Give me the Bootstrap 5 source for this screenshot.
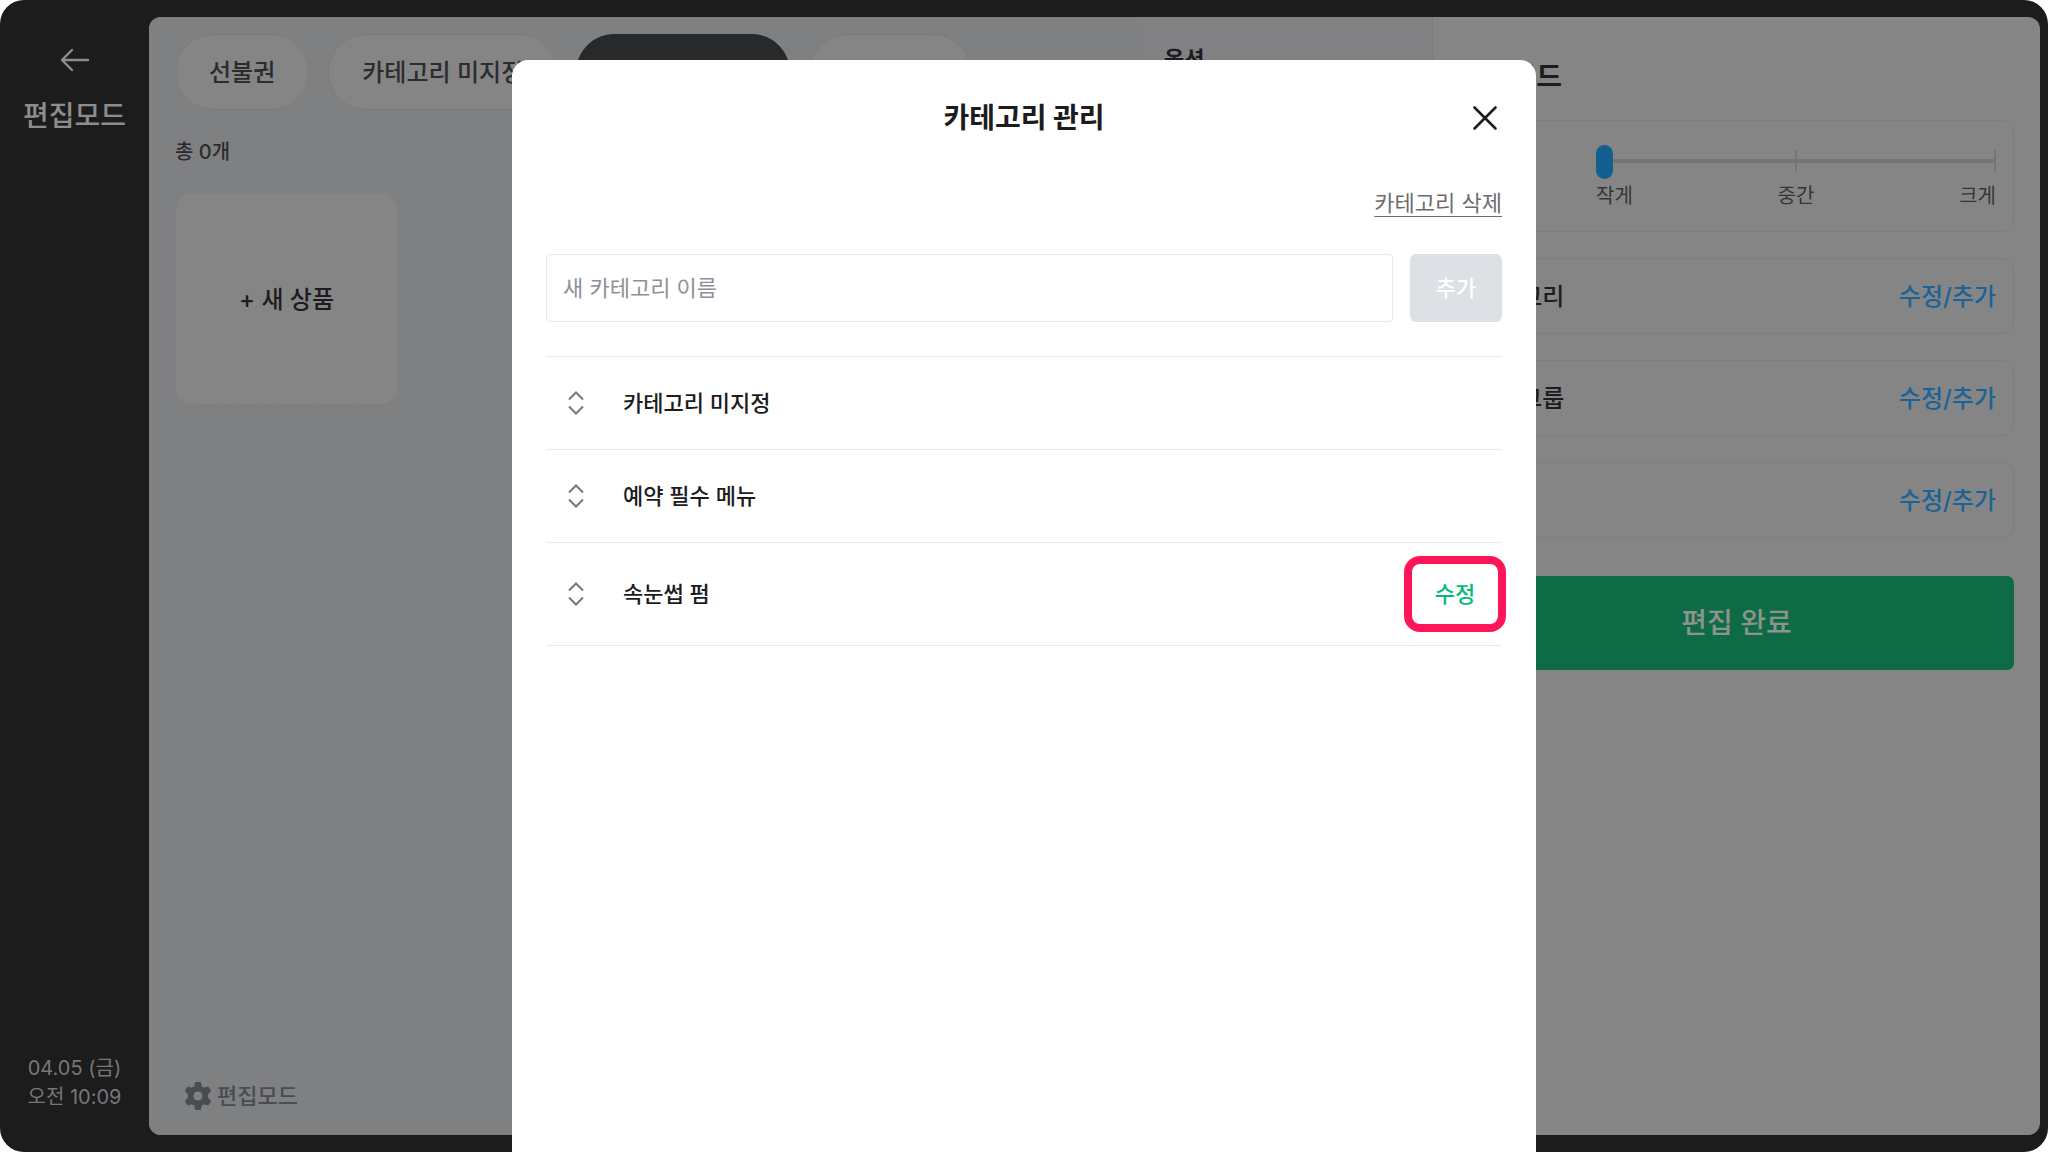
<!DOCTYPE html>
<html lang="ko">
<head>
<meta charset="utf-8">
<meta name="viewport" content="width=device-width, initial-scale=1">
<title>카테고리 관리</title>
<link href="https://cdn.jsdelivr.net/npm/bootstrap@5.3.0/dist/css/bootstrap.min.css" rel="stylesheet">
<style>
  :root { --ink: #1c1c1e; --dim-white: #858585; --dim-blue: #145f92; }
  body { font-family: Inter, "Noto Sans CJK KR", sans-serif; font-size: 22px; line-height: 32px; background: #fff; color: var(--ink); font-weight: 500; }
  button, input { font: inherit; }
  .t-20 { font-size: 20px; line-height: 30px; }
  .t-22 { font-size: 22px; line-height: 32px; }
  .t-24 { font-size: 24px; line-height: 36px; }
  .t-28 { font-size: 28px; line-height: 40px; }

  .app { background: #1c1c1d; border-radius: 24px; padding: 17px 8px 17px 0; }
  .side { flex: 0 0 149px; color: #8d8d8e; padding: 23px 0; }
  .side-clock { color: #777778; font-weight: 400; line-height: 29px; }
  .plain { background: none; border: 0; padding: 0; color: inherit; }

  .work { background: var(--dim-white); border-radius: 12px; }
  .goods { background: #7e8082; padding: 17px 26px 23px; flex: 0 0 989px; }
  .tabs { gap: 19px; }
  .pill { height: 76px; padding: 2px 33px 0; border-radius: 38px; border: 1px solid #7b7c7e; background: var(--dim-white); color: #2c2c2e; white-space: nowrap; }
  .pill.on { background: #28292b; border-color: #28292b; color: var(--dim-white); }
  .total { margin: 27px 0 26px; color: #2c2c2e; }
  .new-item { width: 223px; height: 212px; border: 1px dashed #7b7c7e; border-radius: 16px; background: var(--dim-white); color: var(--ink); padding-top: 2px; }
  .mode { color: #4b4c4f; gap: 5px; margin-left: 9px; }
  .options { flex: 0 0 295px; background: #818183; border-right: 1px solid #7b7b7d; padding: 26px; }
  .edit { padding: 40px 26px 0; min-width: 0; }
  .edit-cards { margin-top: 23px; gap: 26px; }
  .box { border: 1px solid #7e7e7e; border-radius: 12px; padding: 2px 17px 0 16px; min-height: 76px; }
  .box-size { min-height: 112px; }
  .more { color: #1b6396; text-decoration: none; }
  .done { height: 94px; margin-top: 38px; border: 0; border-radius: 7px; background: #0f6a46; color: #8b958e; }

  .sizes { width: 400px; padding-top: 6px; }
  .rail { height: 34px; background:
      linear-gradient(#757576, #757576) right 0 top 5px / 2px 22px no-repeat,
      linear-gradient(#757576, #757576) center top 5px / 2px 22px no-repeat,
      linear-gradient(#757576, #757576) center top 14px / 100% 4px no-repeat; }
  .rail input { appearance: none; width: 100%; height: 34px; margin: 0; background: none; display: block; }
  .rail input::-webkit-slider-runnable-track { height: 34px; background: none; }
  .rail input::-webkit-slider-thumb { appearance: none; width: 17px; height: 34px; border-radius: 9px; background: var(--dim-blue); }
  .rail input::-moz-range-thumb { width: 17px; height: 34px; border: 0; border-radius: 9px; background: var(--dim-blue); }
  .size-names { color: #353537; font-weight: 400; padding-top: 2px; }

  .sheet { width: 50%; top: 60px; bottom: 0; left: 25%; z-index: 10; background: #fff; border-radius: 16px 16px 0 0; padding: 38px 34px; }
  .sheet-head { display: grid; grid-template-columns: 1fr auto 1fr; align-items: center; }
  .sheet-head h1 { margin: 0; font-weight: 700; }
  .closer { justify-self: end; padding: 0 4px; display: flex; }
  .remove { color: #6c6c6f; font-weight: 400; text-underline-offset: 5px; text-decoration-thickness: 1px; }
  .remove-row { margin-top: 49px; }
  .adder { margin-top: 35px; gap: 17px; }
  .adder input { height: 68px; min-width: 0; border: 1px solid #e8e8ea; border-radius: 4px; padding: 0 16px; font-weight: 400; }
  .adder input::placeholder { color: #8e9096; opacity: 1; }
  .adder button { width: 92px; height: 68px; border: 0; border-radius: 6px; background: #dde0e5; color: #fff; }
  .rows { margin: 34px 0 0; border-top: 1px solid #e8e8ea; }
  .entry { height: 93px; border-bottom: 1px solid #e8e8ea; padding-left: 22px; gap: 39px; }
  .entry-tall { height: 103px; }
  .fix { color: #03b97c; width: 94px; height: 76px; }
  .fix::after { content: ""; position: absolute; inset: 0 -4px; border: 8px solid #fe1658; border-radius: 16px; }
</style>
<script src="https://cdn.jsdelivr.net/npm/bootstrap@5.3.0/dist/js/bootstrap.bundle.min.js"></script>
</head>
<body>
<div class="app d-flex vh-100 overflow-hidden">
  <aside class="side d-flex flex-column align-items-center">
    <button class="plain d-flex pt-2 mb-4" type="button" aria-label="뒤로">
      <svg width="30" height="24" viewBox="0 0 30 24" fill="none" stroke="currentColor" stroke-width="2.4" stroke-linecap="round" stroke-linejoin="round"><path d="M12 2 2 12l10 10M2 12h26"/></svg>
    </button>
    <div class="t-28">편집모드</div>
    <div class="side-clock t-20 mt-auto text-center">04.05 (금)<br>오전 10:09</div>
  </aside>

  <main class="work d-flex flex-grow-1 overflow-hidden">
    <section class="goods d-flex flex-column">
      <nav class="tabs d-flex" aria-label="카테고리">
        <button class="pill t-24" type="button">선불권</button>
        <button class="pill t-24" type="button">카테고리 미지정</button>
        <button class="pill on t-24" type="button">예약 필수 메뉴</button>
        <button class="pill t-24" type="button">속눈썹 펌</button>
      </nav>
      <p class="total t-20">총 0개</p>
      <button class="new-item t-24" type="button">+ 새 상품</button>
      <button class="mode plain d-flex align-items-center mt-auto align-self-start t-22" type="button">
        <svg width="28" height="30" viewBox="0 0 28 30" fill="currentColor" fill-rule="evenodd" stroke="currentColor" stroke-linejoin="round"><path d="M11.500 1.500h5l.8 4 3 1.700 3.900-1.300 2.500 4.300-3.100 2.800v4l3.100 2.800-2.500 4.300-3.900-1.300-3 1.700-.8 4h-5l-.8-4-3-1.700-3.900 1.300-2.500-4.300L4.400 17v-4l-3.100-2.800 2.500-4.300 3.900 1.300 3-1.700zM14 10a5 5 0 1 0 0 10 5 5 0 0 0 0-10z"/></svg>
        편집모드
      </button>
    </section>
    <section class="options"><div class="t-22 fw-bold">옵션</div></section>
    <section class="edit flex-grow-1">
      <h2 class="t-28 m-0 fw-bold">편집모드</h2>
      <div class="edit-cards d-flex flex-column">
        <div class="box box-size d-flex justify-content-between">
          <label class="t-24 align-self-center" for="size">크기</label>
          <div class="sizes mt-3">
            <div class="rail"><input id="size" type="range" min="0" max="2" value="0"></div>
            <div class="size-names d-flex justify-content-between t-20"><span>작게</span><span>중간</span><span>크게</span></div>
          </div>
        </div>
        <div class="box d-flex justify-content-between align-items-center t-24"><span>카테고리</span><a class="more" href="#">수정/추가</a></div>
        <div class="box d-flex justify-content-between align-items-center t-24"><span>옵션그룹</span><a class="more" href="#">수정/추가</a></div>
        <div class="box d-flex justify-content-between align-items-center t-24"><span>할인</span><a class="more" href="#">수정/추가</a></div>
      </div>
      <button class="done t-28 w-100" type="button">편집 완료</button>
    </section>
  </main>
</div>

<div class="sheet position-fixed" role="dialog" aria-modal="true" aria-labelledby="sheet-title">
  <header class="sheet-head">
    <span></span>
    <h1 class="t-28" id="sheet-title">카테고리 관리</h1>
    <button class="closer plain" type="button" aria-label="닫기">
      <svg width="26" height="26" viewBox="0 0 26 26" fill="none" stroke="currentColor" stroke-width="2.600" stroke-linecap="round"><path d="m2.500 2.500 21 21m0-21-21 21"/></svg>
    </button>
  </header>
  <div class="remove-row text-end"><a class="remove" href="#">카테고리 삭제</a></div>
  <form class="adder d-flex">
    <input class="flex-grow-1" type="text" placeholder="새 카테고리 이름" aria-label="새 카테고리 이름">
    <button type="button">추가</button>
  </form>
  <ul class="rows list-unstyled">
    <li class="entry d-flex align-items-center">
      <svg width="16" height="26" viewBox="0 0 16 26" fill="none" stroke="#77777a" stroke-width="2"><path d="m1 9.500 7-7 7 7M1 16.500l7 7 7-7"/></svg>
      <span>카테고리 미지정</span>
    </li>
    <li class="entry d-flex align-items-center">
      <svg width="16" height="26" viewBox="0 0 16 26" fill="none" stroke="#77777a" stroke-width="2"><path d="m1 9.500 7-7 7 7M1 16.500l7 7 7-7"/></svg>
      <span>예약 필수 메뉴</span>
    </li>
    <li class="entry entry-tall d-flex align-items-center">
      <svg width="16" height="26" viewBox="0 0 16 26" fill="none" stroke="#77777a" stroke-width="2"><path d="m1 9.500 7-7 7 7M1 16.500l7 7 7-7"/></svg>
      <span>속눈썹 펌</span>
      <button class="fix plain position-relative ms-auto" type="button">수정</button>
    </li>
  </ul>
</div>
</body>
</html>
